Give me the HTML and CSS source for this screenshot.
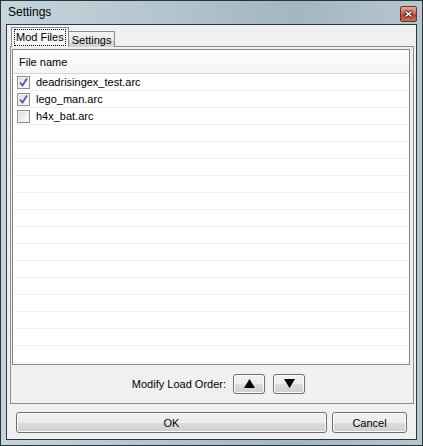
FILE: index.html
```html
<!DOCTYPE html>
<html lang="en">

<head>
    <meta charset="UTF-8">
    <title>Settings</title>
    <link rel="stylesheet" href="styles.css">
</head>

<body>
    <div class="window">
        <div class="titlebar">
            <span class="title">Settings</span>
            <div class="close-btn">
                <svg width="9" height="8" viewBox="0 0 9 8">
                    <path d="M1 1 L8 7 M8 1 L1 7" stroke="#3a2a28" stroke-width="3.4" />
                    <path d="M1.5 1.5 L7.5 6.5 M7.5 1.5 L1.5 6.5" stroke="#ffffff" stroke-width="1.6" />
                </svg>
            </div>
        </div>

        <div class="client">
            <div class="tabs">
                <div class="tab tab-active"><span class="focus">Mod Files</span></div>
                <div class="tab">Settings</div>
            </div>

            <div class="tab-page">
                <div class="listview">
                    <div class="lv-header">
                        <div class="lv-col">File name</div>
                    </div>
                    <div class="lv-row"><span class="checkbox checked"></span>deadrisingex_test.arc</div>
                    <div class="lv-row"><span class="checkbox checked"></span>lego_man.arc</div>
                    <div class="lv-row"><span class="checkbox"></span>h4x_bat.arc</div>
                    <div class="lv-row"></div>
                    <div class="lv-row"></div>
                    <div class="lv-row"></div>
                    <div class="lv-row"></div>
                    <div class="lv-row"></div>
                    <div class="lv-row"></div>
                    <div class="lv-row"></div>
                    <div class="lv-row"></div>
                    <div class="lv-row"></div>
                    <div class="lv-row"></div>
                    <div class="lv-row"></div>
                    <div class="lv-row"></div>
                    <div class="lv-row"></div>
                    <div class="lv-row"></div>
                </div>

                <div class="order-bar">
                    <span class="order-label">Modify Load Order:</span>
                    <div class="btn btn-small">
                        <svg width="11" height="9" viewBox="0 0 11 9"><polygon points="5.5,0 11,9 0,9" fill="#000" /></svg>
                    </div>
                    <div class="btn btn-small">
                        <svg width="11" height="9" viewBox="0 0 11 9"><polygon points="0,0 11,0 5.5,9" fill="#000" /></svg>
                    </div>
                </div>
            </div>

            <div class="dialog-buttons">
                <div class="btn btn-ok">OK</div>
                <div class="btn btn-cancel">Cancel</div>
            </div>
        </div>
    </div>
</body>

</html>
```

FILE: styles.css
```css
body {
    margin: 0;
    font-family: "Liberation Sans", Arial, sans-serif;
    font-size: 11px;
    color: #000;
}

.window {
    width: 423px;
    height: 446px;
    box-sizing: border-box;
    border: 1px solid #27363c;
    padding: 0px 5px 5px;
    display: flex;
    flex-direction: column;
    background: linear-gradient(to right, #c6d5dc, #b2c4cc 40%, #a3b7c0 70%, #b6c6cd);
}

.titlebar {
    height: 23px;
    display: flex;
    align-items: center;
    justify-content: space-between;
}

.title {
    font-size: 12px;
    padding-left: 2px;
    margin-top: -1px;
}

.close-btn {
    width: 15px;
    height: 14px;
    margin-top: 3px;
    border: 1px solid #5b3a35;
    border-radius: 2px;
    background: linear-gradient(#eaa892, #d4644a 50%, #c23d22 51%, #d56a4c);
    display: flex;
    justify-content: center;
    align-items: center;
}

.client {
    flex: 1;
    border: 1px solid #2b3a40;
    background-color: #f0f0f0;
    display: flex;
    flex-direction: column;
    padding: 2px 1px 0px 3px;
}

.tabs {
    display: flex;
    align-items: flex-end;
    height: 20px;
    padding-left: 1px;
    position: relative;
    z-index: 1;
    margin-bottom: -1px;
}

.tab {
    height: 15px;
    padding: 0px 3px;
    border: 1px solid #898c95;
    border-bottom: none;
    border-left: none;
    background: linear-gradient(#f2f2f2, #ebebeb 50%, #dddddd 51%, #cfcfcf);
    display: flex;
    align-items: center;
    font-size: 11px;
}

.tab-active {
    height: 19px;
    padding: 0px 2px;
    border-left: 1px solid #898c95;
    background: #f7f7f7;
}

.focus {
    border: 1px dotted #000;
    padding: 1px 1px 2px;
    line-height: 12px;
}

.tab-page {
    height: 354px;
    border: 1px solid #898c95;
    background-color: #f0f0f0;
    margin-right: 1px;
    padding: 2px 3px 0px 1px;
    display: flex;
    flex-direction: column;
}

.listview {
    height: 314px;
    border: 1px solid #828790;
    background-color: #fff;
    overflow: hidden;
}

.lv-header {
    height: 23px;
    border-bottom: 1px solid #d5d5d5;
    background: linear-gradient(#ffffff, #f3f4f6);
    display: flex;
}

.lv-col {
    padding-left: 6px;
    display: flex;
    align-items: center;
    flex: 1;
    font-size: 11px;
}

.lv-row {
    height: 16px;
    border-bottom: 1px solid #f0f0f0;
    display: flex;
    align-items: center;
    padding-left: 4px;
}

.checkbox {
    width: 11px;
    height: 11px;
    border: 1px solid #8f8f8f;
    margin-right: 6px;
    background: linear-gradient(135deg, #dcdcdc, #f4f4f4 70%, #fbfbfb);
    box-shadow: inset 0 0 0 1px #f4f4f4;
}

.checked {
    background-image: url("data:image/svg+xml,%3Csvg xmlns='http://www.w3.org/2000/svg' width='11' height='11'%3E%3Cpath d='M2 5.5 L4.5 8.5 L9 1.5' fill='none' stroke='%234a5f96' stroke-width='1.8'/%3E%3C/svg%3E"), linear-gradient(135deg, #dcdcdc, #f4f4f4 70%, #fbfbfb);
}

.order-bar {
    flex: 1;
    display: flex;
    align-items: center;
    justify-content: flex-end;
    gap: 8px;
    padding-right: 105px;
    padding-bottom: 1px;
}

.order-label {
    margin-right: -1px;
}

.btn {
    box-sizing: border-box;
    border: 1px solid #707070;
    border-radius: 3px;
    background: linear-gradient(#f2f2f2, #ebebeb 50%, #dddddd 51%, #cfcfcf);
    box-shadow: inset 0 0 0 1px #fcfcfc;
    display: flex;
    justify-content: center;
    align-items: center;
    font-size: 11px;
}

.btn-small {
    width: 32px;
    height: 20px;
}

.dialog-buttons {
    display: flex;
    gap: 5px;
    padding: 8px 0px 0px 6px;
}

.btn-ok {
    width: 311px;
    height: 21px;
}

.btn-cancel {
    width: 75px;
    height: 21px;
}
```
